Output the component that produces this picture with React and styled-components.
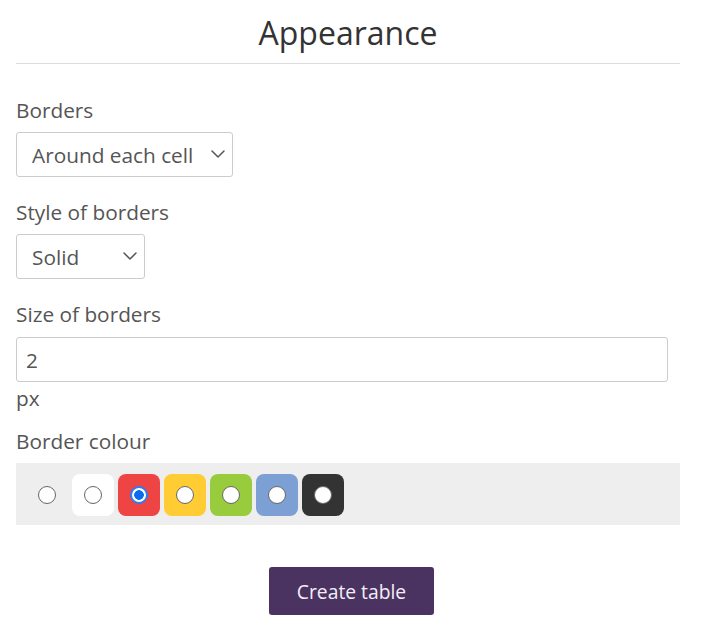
import React from 'react'
import styled, { createGlobalStyle } from 'styled-components'
import { ChevronDown } from 'lucide-react'

const GlobalStyle = createGlobalStyle`
  body {
    margin: 0;
    background: #fff;
    font-family: "Open Sans", "Noto Sans", sans-serif;
  }
`

const colours = [
  { value: 'none', bg: 'transparent' },
  { value: 'white', bg: '#ffffff' },
  { value: 'red', bg: '#ee4444' },
  { value: 'yellow', bg: '#ffcc33' },
  { value: 'green', bg: '#99cc3d' },
  { value: 'blue', bg: '#7c9fd4' },
  { value: 'black', bg: '#333333' },
]

const Dropdown = ({ id, width, value, options }) => (
  <SelectWrap>
    <Select id={id} defaultValue={value} $width={width}>
      {options.map(o => (
        <option key={o.value} value={o.value}>{o.label}</option>
      ))}
    </Select>
    <Chevron size={24} strokeWidth={1.5} />
  </SelectWrap>
)

const App = () => {
  return (
    <Wrap>
      <GlobalStyle />
      <Title>Appearance</Title>

      <Field $top={31}>
        <Label htmlFor="borders">Borders</Label>
        <Dropdown
          id="borders"
          width={217}
          value="cell"
          options={[
            { value: 'cell', label: 'Around each cell' },
            { value: 'table', label: 'Around table' },
            { value: 'none', label: 'None' },
          ]}
        />
      </Field>

      <Field>
        <Label htmlFor="style">Style of borders</Label>
        <Dropdown
          id="style"
          width={129}
          value="solid"
          options={[
            { value: 'solid', label: 'Solid' },
            { value: 'dashed', label: 'Dashed' },
            { value: 'dotted', label: 'Dotted' },
          ]}
        />
      </Field>

      <Field>
        <Label htmlFor="size">Size of borders</Label>
        <Input id="size" type="text" defaultValue="2" />
        <Unit>px</Unit>
      </Field>

      <Field $top={13}>
        <Label>Border colour</Label>
        <Palette>
          {colours.map(c => (
            <Swatch key={c.value} $bg={c.bg}>
              <Radio type="radio" name="colour" value={c.value} defaultChecked={c.value === 'red'} />
            </Swatch>
          ))}
        </Palette>
      </Field>

      <Actions>
        <Button type="button">Create table</Button>
      </Actions>
    </Wrap>
  )
}

const Wrap = styled.div`
  width: 664px;
  padding: 0 0 0 16px;
  color: #555;
`

const Title = styled.h1`
  margin: 0;
  padding: 14px 0 11px;
  border-bottom: 1px solid #dddddd;
  text-align: center;
  font-size: 32px;
  font-weight: 400;
  line-height: 38px;
  color: #333;
`

const Field = styled.div`
  display: flex;
  flex-direction: column;
  align-items: flex-start;
  margin-top: ${props => props.$top ?? 20}px;
`

const Label = styled.label`
  display: block;
  font-size: 20.8px;
  line-height: 30px;
  margin-bottom: 7px;
  color: #555;
`

const SelectWrap = styled.div`
  position: relative;
  display: inline-flex;
`

const Select = styled.select`
  appearance: none;
  width: ${props => props.$width}px;
  height: 45px;
  padding: 0 36px 0 15px;
  font-family: "Open Sans", "Noto Sans", sans-serif;
  font-size: 20.8px;
  color: #555;
  background: #fff;
  border: 1px solid #cccccc;
  border-radius: 3px;
  outline: none;
`

const Chevron = styled(ChevronDown)`
  position: absolute;
  right: 3px;
  top: 10px;
  color: #555;
  pointer-events: none;
`

const Input = styled.input`
  box-sizing: border-box;
  width: 652px;
  height: 45px;
  margin-top: 1px;
  padding: 0 9px;
  font-family: "Open Sans", "Noto Sans", sans-serif;
  font-size: 20.8px;
  color: #555;
  border: 1px solid #cccccc;
  border-radius: 3px;
  outline: none;
`

const Unit = styled.span`
  font-size: 20.8px;
  line-height: 30px;
  margin-top: 1px;
`

const Palette = styled.div`
  box-sizing: border-box;
  width: 664px;
  display: flex;
  gap: 4px;
  padding: 11px 10px 9px;
  background: #eeeeee;
`

const Swatch = styled.label`
  width: 42px;
  height: 42px;
  display: flex;
  align-items: center;
  justify-content: center;
  border-radius: 8px;
  background: ${props => props.$bg};
`

const Radio = styled.input`
  appearance: none;
  box-sizing: border-box;
  width: 18px;
  height: 18px;
  margin: 0;
  border: 1.6px solid #676767;
  border-radius: 50%;
  background: #fff;
  &:checked {
    border: 2px solid #2a7df5;
    background: radial-gradient(circle, #0a6df0 0 4.5px, #fff 5.1px);
  }
`

const Actions = styled.div`
  display: flex;
  justify-content: center;
  padding-top: 42px;
  padding-left: 7px;
`

const Button = styled.button`
  width: 165px;
  height: 48px;
  background: #4a3360;
  color: #f4eef8;
  border: none;
  border-radius: 3px;
  font-family: "Open Sans", "Noto Sans", sans-serif;
  font-size: 19.3px;
  cursor: pointer;
`

export default App
